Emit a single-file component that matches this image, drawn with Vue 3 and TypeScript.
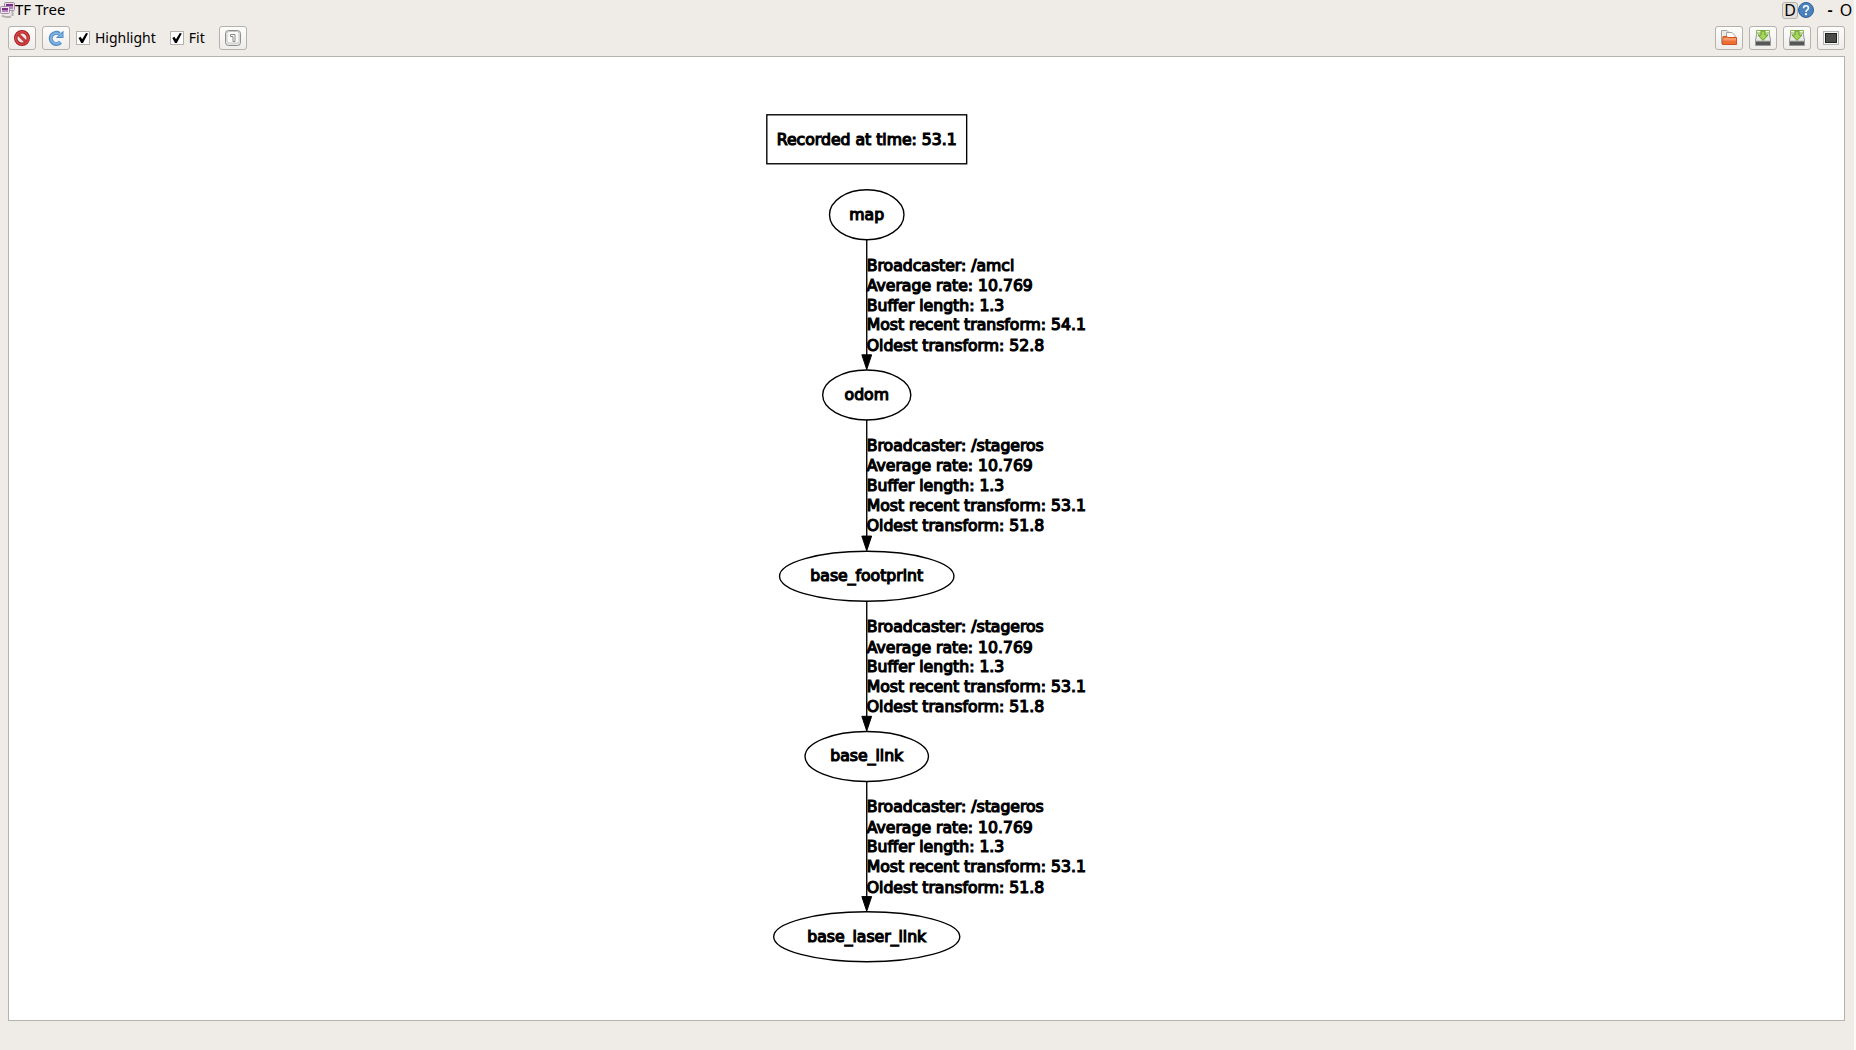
<script setup lang="ts">
interface Edge {
  from: number
  broadcaster: string
  recent: string
  oldest: string
}

interface Frame {
  name: string
  cy: number
  rx: number
}

const cx = 875
const lineOffsets = [57, 78, 98, 118, 139]
const frames: Frame[] = [
  { name: 'map', cy: 161, rx: 38 },
  { name: 'odom', cy: 345, rx: 45 },
  { name: 'base_footprint', cy: 530, rx: 89 },
  { name: 'base_link', cy: 714, rx: 63 },
  { name: 'base_laser_link', cy: 898, rx: 95 },
]
const edges: Edge[] = [
  { from: 0, broadcaster: '/amcl', recent: '54.1', oldest: '52.8' },
  { from: 1, broadcaster: '/stageros', recent: '53.1', oldest: '51.8' },
  { from: 2, broadcaster: '/stageros', recent: '53.1', oldest: '51.8' },
  { from: 3, broadcaster: '/stageros', recent: '53.1', oldest: '51.8' },
]

function lines(e: Edge): string[] {
  return [
    `Broadcaster: ${e.broadcaster}`,
    'Average rate: 10.769',
    'Buffer length: 1.3',
    `Most recent transform: ${e.recent}`,
    `Oldest transform: ${e.oldest}`,
  ]
}
</script>

<template>
  <div class="window">
    <header class="titlebar">
      <svg class="app-icon" width="15" height="18" viewBox="0 0 15 18" aria-hidden="true">
        <path d="M2 14.500q3 2.500 9 1M12.500 10v5" fill="none" stroke="#b4b0b0" stroke-width="2" />
        <rect x="4.500" y="1.500" width="10" height="8" rx="1" fill="#e6d8e8" stroke="#a08ca4" />
        <rect x="6" y="3" width="7" height="5" fill="#b583bb" />
        <path d="M6 3h7v2H6z" fill="#7b3086" />
        <rect x="0.500" y="5.500" width="9" height="7" rx="1" fill="#efe4f0" stroke="#a08ca4" />
        <rect x="2" y="7" width="6" height="4" fill="#b583bb" />
        <path d="M2 7h6v2H2z" fill="#7b3086" />
      </svg>
      <h1>TF Tree</h1>
      <div class="window-controls">
        <button type="button" class="dock">D</button>
        <button type="button" class="help" aria-label="Help">
          <svg width="16" height="16" viewBox="0 0 16 16">
            <circle cx="8" cy="8" r="7.500" fill="#4a82bd" stroke="#2f6299" />
            <path d="M5.500 6.200Q5.600 3.800 8 3.800t2.400 2.100Q10.400 7.100 9.200 7.900T8 10" fill="none" stroke="#fff" stroke-width="1.600" />
            <circle cx="8" cy="12.200" r="1.100" fill="#fff" />
          </svg>
        </button>
        <button type="button" class="plain minimise" aria-label="Minimise">-</button>
        <button type="button" class="plain" aria-label="Maximise">O</button>
      </div>
    </header>

    <div class="toolbar">
      <button type="button" class="tool" aria-label="Clear buffer">
        <svg width="16" height="16" viewBox="0 0 16 16">
          <circle cx="8" cy="8" r="6.300" fill="#efe6e4" stroke="#a3191c" stroke-width="3.400" />
          <path d="M3.800 3.800l8.400 8.400" stroke="#b32022" stroke-width="3" />
          <circle cx="8" cy="8" r="6.300" fill="none" stroke="#d9484a" stroke-width="1.600" />
          <path d="M3.800 3.800l8.400 8.400" stroke="#d43e40" stroke-width="1.600" />
        </svg>
      </button>
      <button type="button" class="tool" aria-label="Refresh">
        <svg width="16" height="16" viewBox="0 0 16 16">
          <path d="M12.500 12.200A5.600 5.600 0 1 1 11.500 3.800" fill="none" stroke="#4f8cc6" stroke-width="4" />
          <path d="M15.500 0.500v7.500H7.800z" fill="#4f8cc6" />
          <path d="M12.200 12A5.400 5.400 0 1 1 11.700 4.200" fill="none" stroke="#7fb2e2" stroke-width="2" />
          <path d="M14.500 2.800V7H10z" fill="#7fb2e2" />
        </svg>
      </button>
      <label class="check"><input type="checkbox" checked /><span>Highlight</span></label>
      <label class="check"><input type="checkbox" checked /><span>Fit</span></label>
      <button type="button" class="tool" aria-label="Fit in view">
        <svg width="16" height="16" viewBox="0 0 16 16">
          <rect x="0.500" y="0.500" width="15" height="15" rx="3" fill="#e4e4e2" stroke="#8e8e8a" />
          <rect x="2" y="1.500" width="12" height="11.500" rx="2" fill="#fafaf9" stroke="#c8c8c4" />
          <path d="M5.500 4.500h4.500v7H8v-5H5.500z" fill="#fff" stroke="#888" />
        </svg>
      </button>
      <div class="spacer"></div>
      <button type="button" class="tool" aria-label="Load DOT graph">
        <svg width="16" height="16" viewBox="0 0 16 16">
          <path d="M0.500 13.500v-13h5.500l2.500 2.500v10.500z" fill="#ececea" stroke="#a3a3a0" />
          <path d="M5.500 9V2.500h5.500l3 3V9z" fill="#fafafa" stroke="#a3a3a0" />
          <path d="M2 6.500h4l1 1h8.500v7h-14z" fill="#ee6f35" stroke="#d0521c" />
          <path d="M2.500 8h12.500v2.500H2.300z" fill="#f79a6a" />
        </svg>
      </button>
      <button
        v-for="n in 2"
        :key="n"
        type="button"
        class="tool"
        :aria-label="n === 1 ? 'Save as DOT graph' : 'Save as SVG'"
      >
        <svg width="16" height="16" viewBox="0 0 16 16">
          <path d="M2 2.500h12l1.500 7.500v5.500h-15V10z" fill="#e9eae7" stroke="#989a95" />
          <path d="M1 11h14v4H1z" fill="#555854" />
          <path d="M1 10.500h14v1H1z" fill="#b9bbb6" />
          <path d="M1.500 0.500h13v2.500h-13z" fill="#f5faee" stroke="#86b34c" />
          <path d="M6 1h4v4h3l-5 5.500L3 5h3z" fill="#a6d35c" stroke="#64a022" />
        </svg>
      </button>
      <button type="button" class="tool" aria-label="Save as image">
        <svg width="16" height="16" viewBox="0 0 16 16">
          <rect x="0.500" y="1.500" width="15" height="13" fill="#f5f5f5" stroke="#b4b4b2" />
          <rect x="2.500" y="3.500" width="11" height="9" fill="#4a4c49" stroke="#222321" />
        </svg>
      </button>
    </div>

    <main class="canvas">
      <svg class="graph" viewBox="0 0 1872 983" preserveAspectRatio="xMidYMid meet" role="img" aria-label="TF tree">
        <rect x="773" y="59" width="204" height="50" class="shape" />
        <text :x="cx" y="90" class="mid">Recorded at time: 53.1</text>
        <g v-for="e in edges" :key="e.from">
          <path :d="`M${cx} ${frames[e.from].cy + 25}V${frames[e.from + 1].cy - 38}`" class="shape" />
          <path :d="`M${cx - 5} ${frames[e.from + 1].cy - 41}h10l-5 15z`" class="arrow" />
          <text
            v-for="(line, i) in lines(e)"
            :key="i"
            :x="cx"
            :y="frames[e.from].cy + lineOffsets[i]"
          >{{ line }}</text>
        </g>
        <g v-for="f in frames" :key="f.name">
          <ellipse :cx="cx" :cy="f.cy" :rx="f.rx" ry="25.500" class="shape" />
          <text :x="cx" :y="f.cy + 5" class="mid">{{ f.name }}</text>
        </g>
      </svg>
    </main>
  </div>
</template>

<style>
body {
  margin: 0;
  background: #efebe7;
}
</style>

<style scoped>
.window {
  display: flex;
  flex-direction: column;
  box-sizing: border-box;
  height: 100vh;
  padding-bottom: 29px;
  border-right: 2px solid #fbfaf9;
  background: #efebe7;
  color: #000;
  font: 14px/20px 'Noto Sans', sans-serif;
}
button {
  margin: 0;
  padding: 0;
  font: inherit;
  color: inherit;
}
svg {
  display: block;
}
.titlebar {
  display: flex;
  align-items: center;
  height: 20px;
}
h1 {
  margin: 0;
  padding-bottom: 2px;
  font-size: 15px;
  line-height: 18px;
  font-weight: 400;
}
.window-controls {
  display: flex;
  align-items: center;
  margin-left: auto;
  font-size: 16px;
}
.dock {
  box-sizing: border-box;
  width: 16px;
  height: 17px;
  border: 1px solid #b5b1ac;
  border-radius: 3px;
  background: #e4e0dc;
  line-height: 15px;
}
.help,
.plain {
  border: 0;
  background: none;
}
.plain {
  width: 16px;
}
.minimise {
  margin-left: 8px;
  font-weight: 600;
}
.toolbar {
  display: flex;
  align-items: center;
  gap: 6px;
  height: 36px;
  padding: 0 9px 0 8px;
}
.tool {
  display: flex;
  align-items: center;
  justify-content: center;
  box-sizing: border-box;
  width: 28px;
  height: 24px;
  border: 1px solid #b5b1ac;
  border-radius: 3px;
  background: linear-gradient(#fdfdfc, #efedea);
}
.check {
  display: flex;
  align-items: center;
  gap: 5px;
  margin-right: 8px;
}
.check input {
  position: relative;
  appearance: none;
  box-sizing: border-box;
  width: 14px;
  height: 14px;
  margin: 0;
  border: 1px solid #b5b1ac;
  background: #fff;
}
.check input:checked::after {
  content: '';
  position: absolute;
  inset: 1px;
  background: #000;
  clip-path: polygon(5% 50%, 25% 38%, 42% 62%, 80% 0, 100% 4%, 50% 100%, 32% 100%);
}
.spacer {
  flex: 1;
}
.canvas {
  flex: 1;
  min-height: 0;
  margin: 0 9px 0 8px;
  border: 1px solid #b5b2ae;
  background: #fff;
}
.graph {
  width: 100%;
  height: 100%;
}
.graph text {
  font: 16px 'DejaVu Sans', sans-serif;
  stroke: #000;
  stroke-width: 1.200;
}
.graph .mid {
  text-anchor: middle;
}
.shape {
  fill: none;
  stroke: #000;
  stroke-width: 1.400;
}
.arrow {
  stroke: #000;
}
</style>
